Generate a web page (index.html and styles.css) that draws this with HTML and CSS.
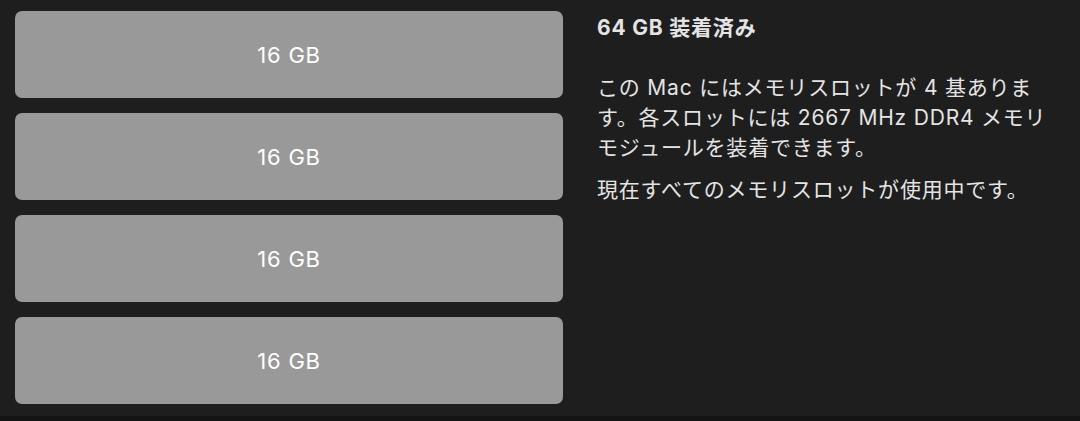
FILE: index.html
```html
<!DOCTYPE html>
<html lang="ja">
<head>
    <meta charset="UTF-8">
    <meta name="viewport" content="width=device-width, initial-scale=1.0">
    <title>メモリ</title>
    <link rel="stylesheet" href="styles.css">
</head>
<body>
    <div class="memory">
        <div class="slots">
            <div class="slot">16 GB</div>
            <div class="slot">16 GB</div>
            <div class="slot">16 GB</div>
            <div class="slot">16 GB</div>
        </div>
        <div class="info">
            <h1 class="total">64 GB 装着済み</h1>
            <p class="desc">この Mac にはメモリスロットが 4 基あります。各スロットには 2667 MHz DDR4 メモリモジュールを装着できます。</p>
            <p class="desc">現在すべてのメモリスロットが使用中です。</p>
        </div>
    </div>
    <div class="bottom"></div>
</body>
</html>
```

FILE: styles.css
```css
body {
    margin: 0;
    background: #1e1e1e;
    color: #e4e4e4;
    font-family: "Inter", "Noto Sans CJK JP", sans-serif;
}
.memory {
    display: flex;
    height: 416px;
    padding: 11px 0 0 15px;
    box-sizing: border-box;
}
.slots {
    display: flex;
    flex-direction: column;
    gap: 15px;
    width: 548px;
}
.slot {
    height: 87px;
    background: #999999;
    border-radius: 7px;
    display: flex;
    align-items: center;
    justify-content: center;
    color: #ffffff;
    font-size: 22px;
    letter-spacing: 0.8px;
}
.info {
    margin-left: 34px;
    width: 454px;
}
.total {
    font-size: 21px;
    font-weight: 700;
    margin: 2px 0 0 0;
    line-height: 30px;
    letter-spacing: 0.8px;
}
.desc {
    font-size: 21px;
    line-height: 30px;
    letter-spacing: 0.8px;
    margin: 0 0 12px 0;
}
.total + .desc {
    margin-top: 30px;
}
.bottom {
    height: 5px;
    background: #141414;
}
```
